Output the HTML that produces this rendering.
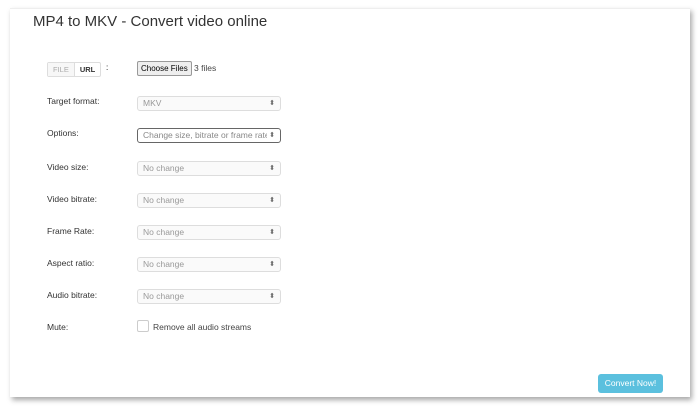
<!DOCTYPE html>
<html><head><style>
body{margin:0;width:700px;height:407px;background:#fff;font-family:"Liberation Sans",sans-serif;position:relative;overflow:hidden}
.card{position:absolute;left:10px;top:8px;width:680px;height:388px;background:#fff;border-top:1px solid #eee;box-shadow:2px 3px 5px rgba(0,0,0,.35)}
h1{position:absolute;left:33px;top:13px;margin:0;font-weight:normal;font-size:15px;color:#333}
.lbl{position:absolute;left:47px;font-size:8.5px;color:#333}
.sel{position:absolute;left:137px;height:13px;border:1px solid #ddd;border-radius:3px;background:#fafafa;font-size:8.5px;color:#999;line-height:13px;padding-left:5px;width:137px;overflow:hidden;white-space:nowrap}
.sel:after{content:"⬍";position:absolute;right:5px;top:0;font-size:7px;color:#666;background:inherit;padding-left:2px}
.tabs{position:absolute;left:47px;top:62px;height:13px;border:1px solid #ddd;border-radius:2px;font-size:7.5px;display:flex}
.tabs span{padding:0 5px;line-height:13px}
</style></head><body>
<div class="card"></div>
<h1>MP4 to MKV - Convert video online</h1>
<div class="tabs"><span style="color:#aaa;background:#f7f7f7;border-right:1px solid #ddd">FILE</span><span style="font-weight:bold;color:#333">URL</span></div>
<div style="position:absolute;left:106px;top:63px;font-size:8px">:</div>
<div style="position:absolute;left:137px;top:61px;height:13px;border:1px solid #999;background:#eee;font-size:8px;line-height:13px;padding:0 3px;border-radius:2px">Choose Files</div>
<div style="position:absolute;left:194px;top:63px;font-size:8.5px;color:#444">3 files</div>
<div class="lbl" style="top:96px">Target format:</div><div class="sel" style="top:96px">MKV</div>
<div class="lbl" style="top:128px">Options:</div><div class="sel" style="top:128px;border-color:#666;color:#888;background:#fff">Change size, bitrate or frame rate</div>
<div class="lbl" style="top:162px">Video size:</div><div class="sel" style="top:161px">No change</div>
<div class="lbl" style="top:194px">Video bitrate:</div><div class="sel" style="top:193px">No change</div>
<div class="lbl" style="top:226px">Frame Rate:</div><div class="sel" style="top:225px">No change</div>
<div class="lbl" style="top:258px">Aspect ratio:</div><div class="sel" style="top:257px">No change</div>
<div class="lbl" style="top:290px">Audio bitrate:</div><div class="sel" style="top:289px">No change</div>
<div class="lbl" style="top:322px">Mute:</div>
<div style="position:absolute;left:137px;top:320px;width:10px;height:10px;border:1px solid #ccc;border-radius:2px"></div>
<div style="position:absolute;left:153px;top:322px;font-size:8.5px;color:#444">Remove all audio streams</div>
<div style="position:absolute;left:598px;top:374px;width:65px;height:19px;background:#5bc0de;border-radius:3px;color:#fff;font-size:8.5px;line-height:19px;text-align:center">Convert Now!</div>
</body></html>
